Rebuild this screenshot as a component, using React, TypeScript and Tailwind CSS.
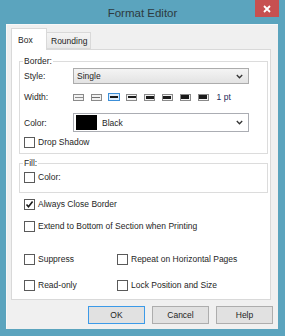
import type { ReactNode } from "react";

function Check({ checked = false, children }: { checked?: boolean; children: ReactNode }) {
  return (
    <div className="flex items-center h-[12px]">
      <div className="w-[11px] h-[11px] border border-[#5a5a5a] bg-white flex items-center justify-center shrink-0">
        {checked && (
          <svg width="9" height="9" viewBox="0 0 9 9">
            <path d="M1.5 4.5 L3.5 6.8 L7.6 1.6" fill="none" stroke="#1a1a1a" strokeWidth="1.6" />
          </svg>
        )}
      </div>
      <span className="ml-[3px] whitespace-nowrap">{children}</span>
    </div>
  );
}

function Chevron() {
  return (
    <svg width="7" height="5" viewBox="0 0 7 5" className="shrink-0">
      <path d="M0.8 1 L3.5 3.8 L6.2 1" fill="none" stroke="#333" strokeWidth="1.3" />
    </svg>
  );
}

// line thickness + colour of each width swatch
const widths = [
  { h: 1, c: "#8c8c8c" },
  { h: 1, c: "#6e6e6e" },
  { h: 2, c: "#1a1a1a" },
  { h: 2, c: "#1a1a1a" },
  { h: 3, c: "#1a1a1a" },
  { h: 3, c: "#1a1a1a" },
  { h: 4, c: "#1a1a1a" },
  { h: 4, c: "#1a1a1a" },
];

export default function App() {
  return (
    <div className="w-[285px] h-[336px] bg-[#5ba4be] flex flex-col font-['Liberation_Sans',Arial,sans-serif] text-[8.5px] leading-[10px] text-[#1e1e1e] overflow-hidden">
      {/* title bar */}
      <div className="h-[24px] relative flex items-center justify-center shrink-0">
        <span className="text-[11.5px] text-[#2d3a40] pt-[2px]">Format Editor</span>
        <div className="absolute top-0 right-[6px] w-[24px] h-[17px] bg-[#c75050] flex items-center justify-center">
          <svg width="8" height="8" viewBox="0 0 8 8">
            <path d="M1 1 L7 7 M7 1 L1 7" stroke="#fff" strokeWidth="1.8" />
          </svg>
        </div>
      </div>

      {/* client */}
      <div className="ml-[6px] w-[272px] h-[305px] bg-[#f0f0f0] border-l border-t border-[#f8f8f8] flex flex-col pl-[4px] pr-[7px] pt-[3px]">
        {/* tabs */}
        <div className="flex items-end h-[21px] relative z-10">
          <div className="w-[36px] h-[22px] -mb-[1px] bg-white border border-b-0 border-[#d9d9d9] pl-[6px] flex items-center">
            Box
          </div>
          <div className="w-[44px] h-[17px] bg-gradient-to-b from-[#f4f4f4] to-[#e8e8e8] border border-l-0 border-[#d9d9d9] pl-[4px] flex items-center">
            Rounding
          </div>
        </div>

        {/* panel */}
        <div className="w-[260px] h-[251px] bg-white border border-[#d9d9d9] flex flex-col pl-[12px]">
          <fieldset className="ml-[-5px] mr-[2px] border border-[#dcdcdc] pl-[4px] pr-0 pb-[5px] mt-[6px]">
            <legend className="px-[1px] ml-[-1px] h-[10px]">Border:</legend>
            <div className="flex items-center h-[16px] mt-[2px]">
              <span className="w-[49px]">Style:</span>
              <div className="w-[176px] h-[16px] border border-[#acacac] bg-gradient-to-b from-[#f4f4f4] to-[#e3e3e3] flex items-center pl-[3px] pr-[5px]">
                <span className="flex-1">Single</span>
                <Chevron />
              </div>
            </div>
            <div className="flex items-center h-[16px] mt-[5px]">
              <span className="w-[49px]">Width:</span>
              <div className="flex items-center gap-[6.8px]">
                {widths.map((w, i) => (
                  <div
                    key={i}
                    className={
                      i === 2
                        ? "w-[12px] h-[8px] border border-[#3c8fd8] bg-[#dcecfc] flex items-center justify-center -mx-[0.5px]"
                        : "w-[11px] h-[7px] border border-[#8a8a8a] bg-[#f2f2f2] flex items-center justify-center"
                    }
                  >
                    <div className="w-[8px]" style={{ height: w.h, background: w.c }} />
                  </div>
                ))}
              </div>
              <span className="ml-[8px] text-[#1c2a5a]">1 pt</span>
            </div>
            <div className="flex items-center h-[19px] mt-[8px]">
              <span className="w-[49px]">Color:</span>
              <div className="w-[176px] h-[19px] border border-[#abadb3] bg-white flex items-center pl-[2px] pr-[5px]">
                <div className="w-[21px] h-[15px] bg-black" />
                <span className="flex-1 ml-[5px]">Black</span>
                <Chevron />
              </div>
            </div>
            <div className="mt-[4px]">
              <Check>Drop Shadow</Check>
            </div>
          </fieldset>

          <fieldset className="ml-[-5px] mr-[2px] border border-[#dcdcdc] pl-[4px] pr-0 pb-[9px] mt-[4px]">
            <legend className="px-[1px] ml-[-1px] h-[10px]">Fill:</legend>
            <div className="mt-[3px]">
              <Check>Color:</Check>
            </div>
          </fieldset>

          <div className="mt-[5px]">
            <Check checked>Always Close Border</Check>
          </div>
          <div className="mt-[10px]">
            <Check>Extend to Bottom of Section when Printing</Check>
          </div>
          <div className="grid grid-cols-[93px_1fr] mt-[21px]">
            <Check>Suppress</Check>
            <Check>Repeat on Horizontal Pages</Check>
          </div>
          <div className="grid grid-cols-[93px_1fr] mt-[14px]">
            <Check>Read-only</Check>
            <Check>Lock Position and Size</Check>
          </div>
        </div>

        {/* buttons */}
        <div className="flex justify-end gap-[7px] mt-[6px] mr-[-2px]">
          <button className="w-[57px] h-[18px] bg-[#e1e1e1] border border-[#3c9ae8]">OK</button>
          <button className="w-[57px] h-[18px] bg-[#e1e1e1] border border-[#adadad]">Cancel</button>
          <button className="w-[57px] h-[18px] bg-[#e1e1e1] border border-[#adadad]">Help</button>
        </div>
      </div>
    </div>
  );
}
